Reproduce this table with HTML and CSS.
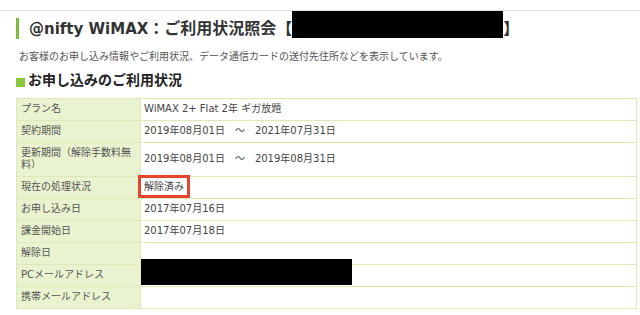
FILE: index.html
```html
<!DOCTYPE html>
<html lang="ja">
<head>
<meta charset="utf-8">
<title>@nifty WiMAX ご利用状況照会</title>
<link rel="stylesheet" href="styles.css">
</head>
<body>
<div class="page">
  <h1 class="title">
    <span class="title-text"><span class="title-latin">@nifty WiMAX</span>：ご利用状況照会【</span>
    <span class="redact title-redact"></span>
    <span class="title-text">】</span>
  </h1>
  <p class="lead">お客様のお申し込み情報やご利用状況、データ通信カードの送付先住所などを表示しています。</p>
  <h2 class="section"><span class="mark"></span>お申し込みのご利用状況</h2>
  <table class="info">
    <tr><th>プラン名</th><td>WiMAX 2+ Flat 2年 ギガ放題</td></tr>
    <tr><th>契約期間</th><td>2019年08月01日　～　2021年07月31日</td></tr>
    <tr><th>更新期間（解除手数料無料）</th><td>2019年08月01日　～　2019年08月31日</td></tr>
    <tr><th>現在の処理状況</th><td><span class="status">解除済み</span></td></tr>
    <tr><th>お申し込み日</th><td>2017年07月16日</td></tr>
    <tr><th>課金開始日</th><td>2017年07月18日</td></tr>
    <tr><th>解除日</th><td></td></tr>
    <tr><th>PCメールアドレス</th><td class="has-redact"><span class="redact cell-redact"></span></td></tr>
    <tr><th>携帯メールアドレス</th><td></td></tr>
  </table>
</div>
</body>
</html>
```

FILE: styles.css
```css
html, body {
  margin: 0;
  padding: 0;
  background: #ffffff;
}
body {
  font-family: "DejaVu Sans", "Noto Sans CJK JP", sans-serif;
  color: #444;
}
.page {
  margin-top: 10px;
  border-top: 1px solid #e2e2e2;
  padding-top: 7px;
}
.title {
  display: flex;
  align-items: flex-start;
  margin: 0 0 0 16px;
  height: 21px;
  border-left: 3px solid #7cbd3a;
  padding-left: 10px;
  font-size: 16px;
  line-height: 21px;
  font-weight: bold;
  color: #333;
  white-space: nowrap;
}
.title-latin {
  font-size: 15px;
}
.redact {
  display: block;
  background: #000;
}
.title-redact {
  width: 211px;
  height: 27px;
  margin-top: -7px;
}
.lead {
  margin: 12px 0 0 19px;
  font-size: 10px;
  line-height: 12px;
  color: #555;
}
.section {
  display: flex;
  align-items: flex-start;
  margin: 8px 0 0 16px;
  font-size: 14px;
  line-height: 18px;
  font-weight: bold;
  color: #222;
}
.mark {
  width: 9px;
  height: 9px;
  margin: 7px 3px 0 0;
  background: #8cc540;
}
.info {
  margin: 9px 0 0 16px;
  width: 621px;
  border-collapse: collapse;
  font-size: 10px;
  line-height: 12px;
  color: #444;
}
.info th, .info td {
  border: 1px solid #dfe9b8;
  padding: 4px 4px 5px 4px;
  text-align: left;
  vertical-align: middle;
  font-weight: normal;
}
.info th {
  width: 115px;
  background: #eaf3cf;
  color: #555;
}
.info td {
  padding-left: 3px;
}
.status {
  outline: 3px solid #e8432d;
  outline-offset: 3px;
}
.has-redact {
  position: relative;
}
.cell-redact {
  position: absolute;
  left: 0;
  top: -6px;
  width: 211px;
  height: 26px;
}
```
